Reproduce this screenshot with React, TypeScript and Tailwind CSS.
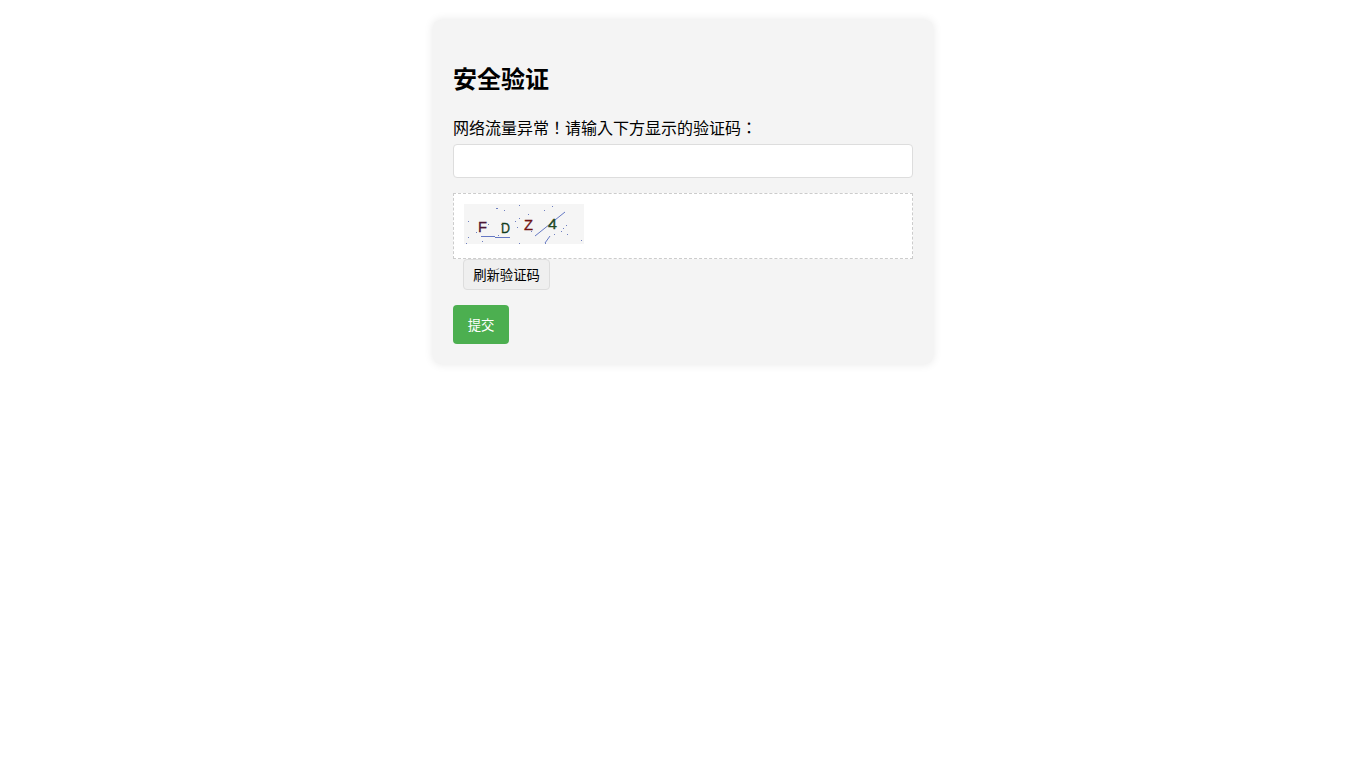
const dots: [number, number, number?][] = [
  [32, 4, 2], [40, 6], [55, 1], [80, 6], [88, 2], [4, 17], [55, 14], [51, 17], [64, 10],
  [24, 20], [37, 20], [53, 23], [12, 28], [4, 33], [18, 37], [2, 39], [55, 39], [117, 36],
  [102, 21], [99, 24], [97, 27], [103, 30], [90, 30], [67, 27], [34, 31], [81, 39],
];

const letters = [
  { ch: "F", x: 14, y: 28, fill: "#4a1636" },
  { ch: "D", x: 37, y: 29, fill: "#123d1c" },
  { ch: "Z", x: 60, y: 26, fill: "#701414" },
  { ch: "4", x: 84, y: 25, fill: "#234a1e" },
];

function Captcha() {
  return (
    <svg width="120" height="40" viewBox="0 0 120 40" className="block bg-[#f5f5f5]">
      <g fill="#6f7fc0" shapeRendering="crispEdges">
        {dots.map(([x, y, w], i) => (
          <rect key={i} x={x} y={y} width={w ?? 1} height="1" />
        ))}
      </g>
      <g stroke="#6478c4" strokeWidth="1" fill="none">
        <path d="M17 32.5H31" shapeRendering="crispEdges" />
        <path d="M31 33.5H46" shapeRendering="crispEdges" />
        <path d="M71 32L101 8" />
        <path d="M81 39L86 32" />
      </g>
      {letters.map((l) => (
        <text key={l.ch} x={l.x} y={l.y} fill={l.fill} stroke={l.fill} strokeWidth="0.3" fontSize="14" fontFamily="'Liberation Sans', sans-serif" textLength="9" lengthAdjust="spacingAndGlyphs">
          {l.ch}
        </text>
      ))}
    </svg>
  );
}

export default function App() {
  return (
    <div className="min-h-screen bg-white text-black font-['Liberation_Sans','Noto_Sans_CJK_JP',sans-serif]">
      <div className="w-[500px] mx-auto relative top-5 p-5 bg-[#f4f4f4] rounded-lg shadow-[0_0_10px_rgba(0,0,0,0.1)]">
        <h2 className="text-2xl font-bold mt-[26px] mb-[23px] leading-[28px]">安全验证</h2>
        <label className="block text-base leading-[24px] mb-[3px]">网络流量异常！请输入下方显示的验证码：</label>
        <input type="text" className="block w-full h-[34px] px-2 bg-white border border-[#ddd] rounded mb-[15px]" />
        <div className="pt-2.5 px-2.5 pb-3.5 bg-white border border-dashed border-[#ccc]">
          <Captcha />
        </div>
        <button className="block ml-2.5 h-[31px] w-[87px] pt-0.5 text-[13.33px] bg-[#efefef] border border-[#ddd] rounded">刷新验证码</button>
        <button className="block mt-[15px] h-[39px] w-14 pt-0.5 text-[13.33px] text-white bg-[#4caf50] rounded">提交</button>
      </div>
    </div>
  );
}
